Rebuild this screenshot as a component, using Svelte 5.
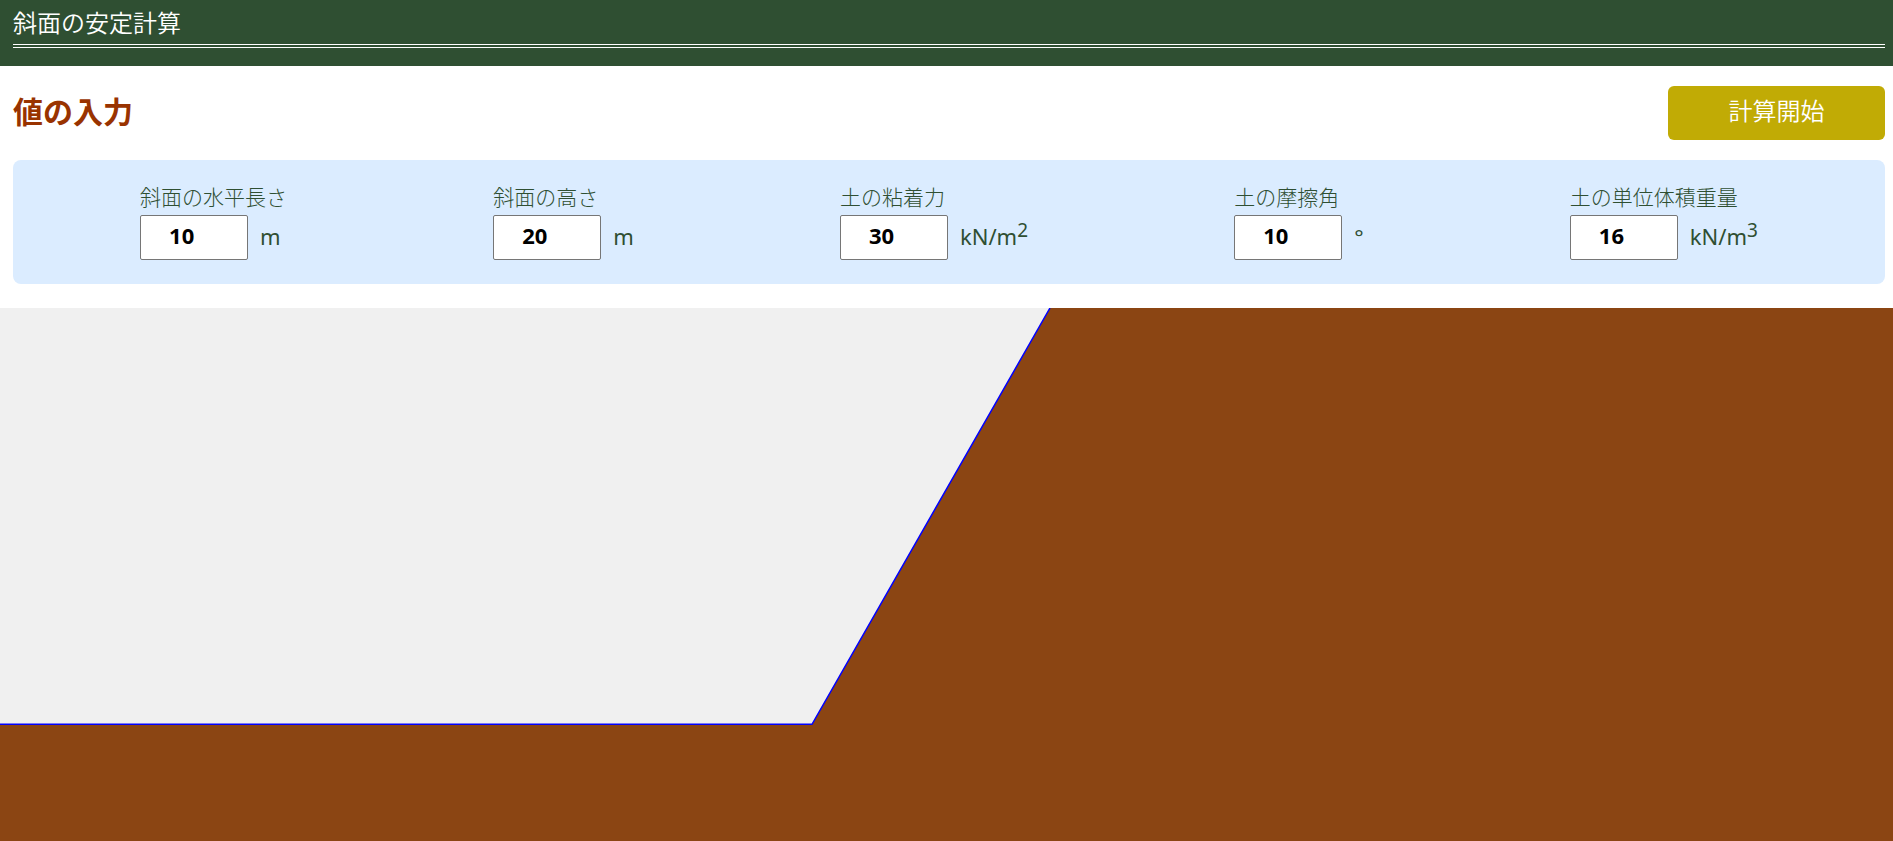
<script>
  let fields = $state([
    { id: 'length', label: '斜面の水平長さ', value: 10, unit: 'm', power: '' },
    { id: 'height', label: '斜面の高さ', value: 20, unit: 'm', power: '' },
    { id: 'cohesion', label: '土の粘着力', value: 30, unit: 'kN/m', power: '2' },
    { id: 'friction', label: '土の摩擦角', value: 10, unit: '°', power: '' },
    { id: 'weight', label: '土の単位体積重量', value: 16, unit: 'kN/m', power: '3' }
  ]);
</script>

<div class="page">
  <header>
    <h1>斜面の安定計算</h1>
  </header>

  <main>
    <form onsubmit={(event) => event.preventDefault()}>
      <div class="heading">
        <h2>値の入力</h2>
        <button type="submit">計算開始</button>
      </div>

      <div class="panel">
        {#each fields as field (field.id)}
          <div class="field">
            <label for={field.id}>{field.label}</label>
            <div class="entry">
              <input id={field.id} type="number" bind:value={field.value} />
              <span class="unit">{field.unit}{#if field.power}<sup>{field.power}</sup>{/if}</span>
            </div>
          </div>
        {/each}
      </div>
    </form>

    <svg class="slope" viewBox="0 0 1893 533" preserveAspectRatio="xMidYMin slice" aria-hidden="true">
      <rect width="1893" height="533" fill="#f0f0f0" />
      <path d="M0 416.25H812L1050 0H1893V533H0Z" fill="#8b4513" />
      <path d="M0 416.25H812L1050 0" fill="none" stroke="#0000ff" stroke-width="1.5" />
    </svg>
  </main>
</div>

<style>
  :global(body) {
    margin: 0;
  }

  .page {
    display: flex;
    flex-direction: column;
    min-height: 100vh;
    background: #fff;
    color: #2f4f32;
    font-family: "Noto Sans CJK JP", sans-serif;
    font-weight: 300;
  }

  header {
    padding: 0 8px 18px 13px;
    background: #2f4f32;
  }

  h1 {
    margin: 0;
    padding: 4px 0;
    border-bottom: 4px double #fff;
    color: #fff;
    font-size: 24px;
    font-weight: 350;
    line-height: 36px;
  }

  main {
    display: flex;
    flex: 1;
    flex-direction: column;
  }

  form {
    padding: 20px 8px 24px 13px;
  }

  .heading {
    display: flex;
    align-items: flex-start;
    justify-content: space-between;
    margin-bottom: 20px;
  }

  h2 {
    margin: 0;
    color: #993300;
    font-size: 30px;
    font-weight: 700;
    line-height: 48px;
  }

  button {
    width: 217px;
    height: 54px;
    padding: 0 0 8px;
    border: 0;
    border-radius: 6px;
    background: #c1ab05;
    color: #fff;
    font: inherit;
    font-size: 24px;
    font-weight: 350;
    cursor: pointer;
  }

  .panel {
    display: flex;
    justify-content: space-around;
    padding: 24px;
    border-radius: 8px;
    background: #dbecff;
  }

  label {
    display: block;
    margin-bottom: 7px;
    font-size: 21px;
    line-height: 24px;
  }

  .entry {
    display: flex;
    align-items: flex-start;
    gap: 12px;
  }

  input {
    box-sizing: border-box;
    width: 108px;
    height: 45px;
    padding: 0 0 5px 28px;
    border: 1px solid #767676;
    border-radius: 2px;
    background: #fff;
    color: #000;
    font-family: "Noto Sans", sans-serif;
    font-size: 22px;
    font-weight: 700;
    appearance: textfield;
  }

  .unit {
    font-family: "Noto Sans", sans-serif;
    font-size: 22px;
    font-weight: 400;
    line-height: 42px;
  }

  sup {
    font-size: 19px;
    line-height: 0;
  }

  .slope {
    display: block;
    flex: 1 0 0;
    width: 100%;
    min-height: 240px;
  }
</style>
